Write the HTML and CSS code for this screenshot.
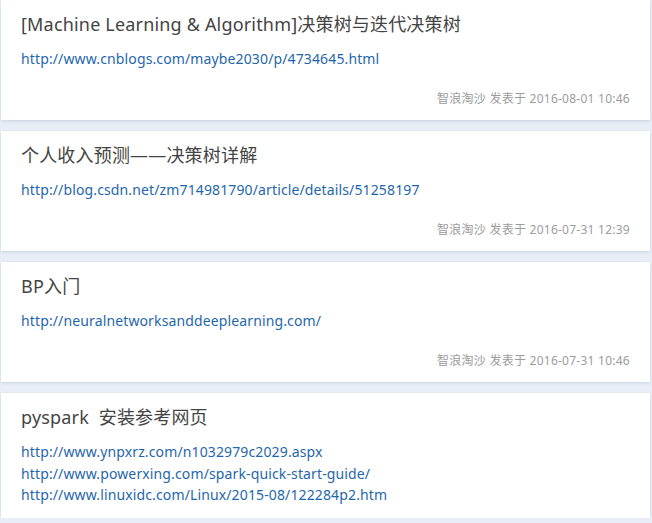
FILE: index.html
```html
<!DOCTYPE html>
<html lang="zh-CN">
<head>
<meta charset="utf-8">
<title>Posts</title>
<link rel="stylesheet" href="styles.css">
</head>
<body>
<div class="list">
  <div class="card">
    <h2 class="title">[Machine Learning &amp; Algorithm]决策树与迭代决策树</h2>
    <div class="body"><a href="#">http://www.cnblogs.com/maybe2030/p/4734645.html</a></div>
    <div class="meta">智浪淘沙 发表于 2016-08-01 10:46</div>
  </div>
  <div class="card">
    <h2 class="title">个人收入预测——决策树详解</h2>
    <div class="body"><a href="#">http://blog.csdn.net/zm714981790/article/details/51258197</a></div>
    <div class="meta">智浪淘沙 发表于 2016-07-31 12:39</div>
  </div>
  <div class="card">
    <h2 class="title">BP入门</h2>
    <div class="body"><a href="#">http://neuralnetworksanddeeplearning.com/</a></div>
    <div class="meta">智浪淘沙 发表于 2016-07-31 10:46</div>
  </div>
  <div class="card">
    <h2 class="title">pyspark &nbsp;安装参考网页</h2>
    <div class="body">
      <a href="#">http://www.ynpxrz.com/n1032979c2029.aspx</a><br>
      <a href="#">http://www.powerxing.com/spark-quick-start-guide/</a><br>
      <a href="#">http://www.linuxidc.com/Linux/2015-08/122284p2.htm</a>
    </div>
  </div>
</div>
</body>
</html>
```
FILE: styles.css
```css
html, body {
  margin: 0;
  padding: 0;
  background: #e9eef6;
  font-family: "Noto Sans", "Noto Sans CJK SC", sans-serif;
}
.list {
  display: flex;
  flex-direction: column;
  gap: 11.5px;
  padding: 0 2px 0 1px;
}
.card {
  background: #fff;
  padding: 12px 20px 12px 20px;
  box-shadow: 0 1px 3px rgba(160, 175, 200, 0.45);
}
.title {
  margin: 0;
  font-size: 18px;
  font-weight: normal;
  line-height: 24px;
  letter-spacing: 0.18px;
  color: #444;
}
.body {
  margin-top: 12px;
  font-size: 14px;
  line-height: 21.5px;
  letter-spacing: 0.13px;
}
.body a {
  color: #1f67ac;
  text-decoration: none;
}
.meta {
  margin-top: 20px;
  text-align: right;
  font-size: 12px;
  line-height: 18px;
  letter-spacing: 0.25px;
  color: #9c9c9c;
}
```
